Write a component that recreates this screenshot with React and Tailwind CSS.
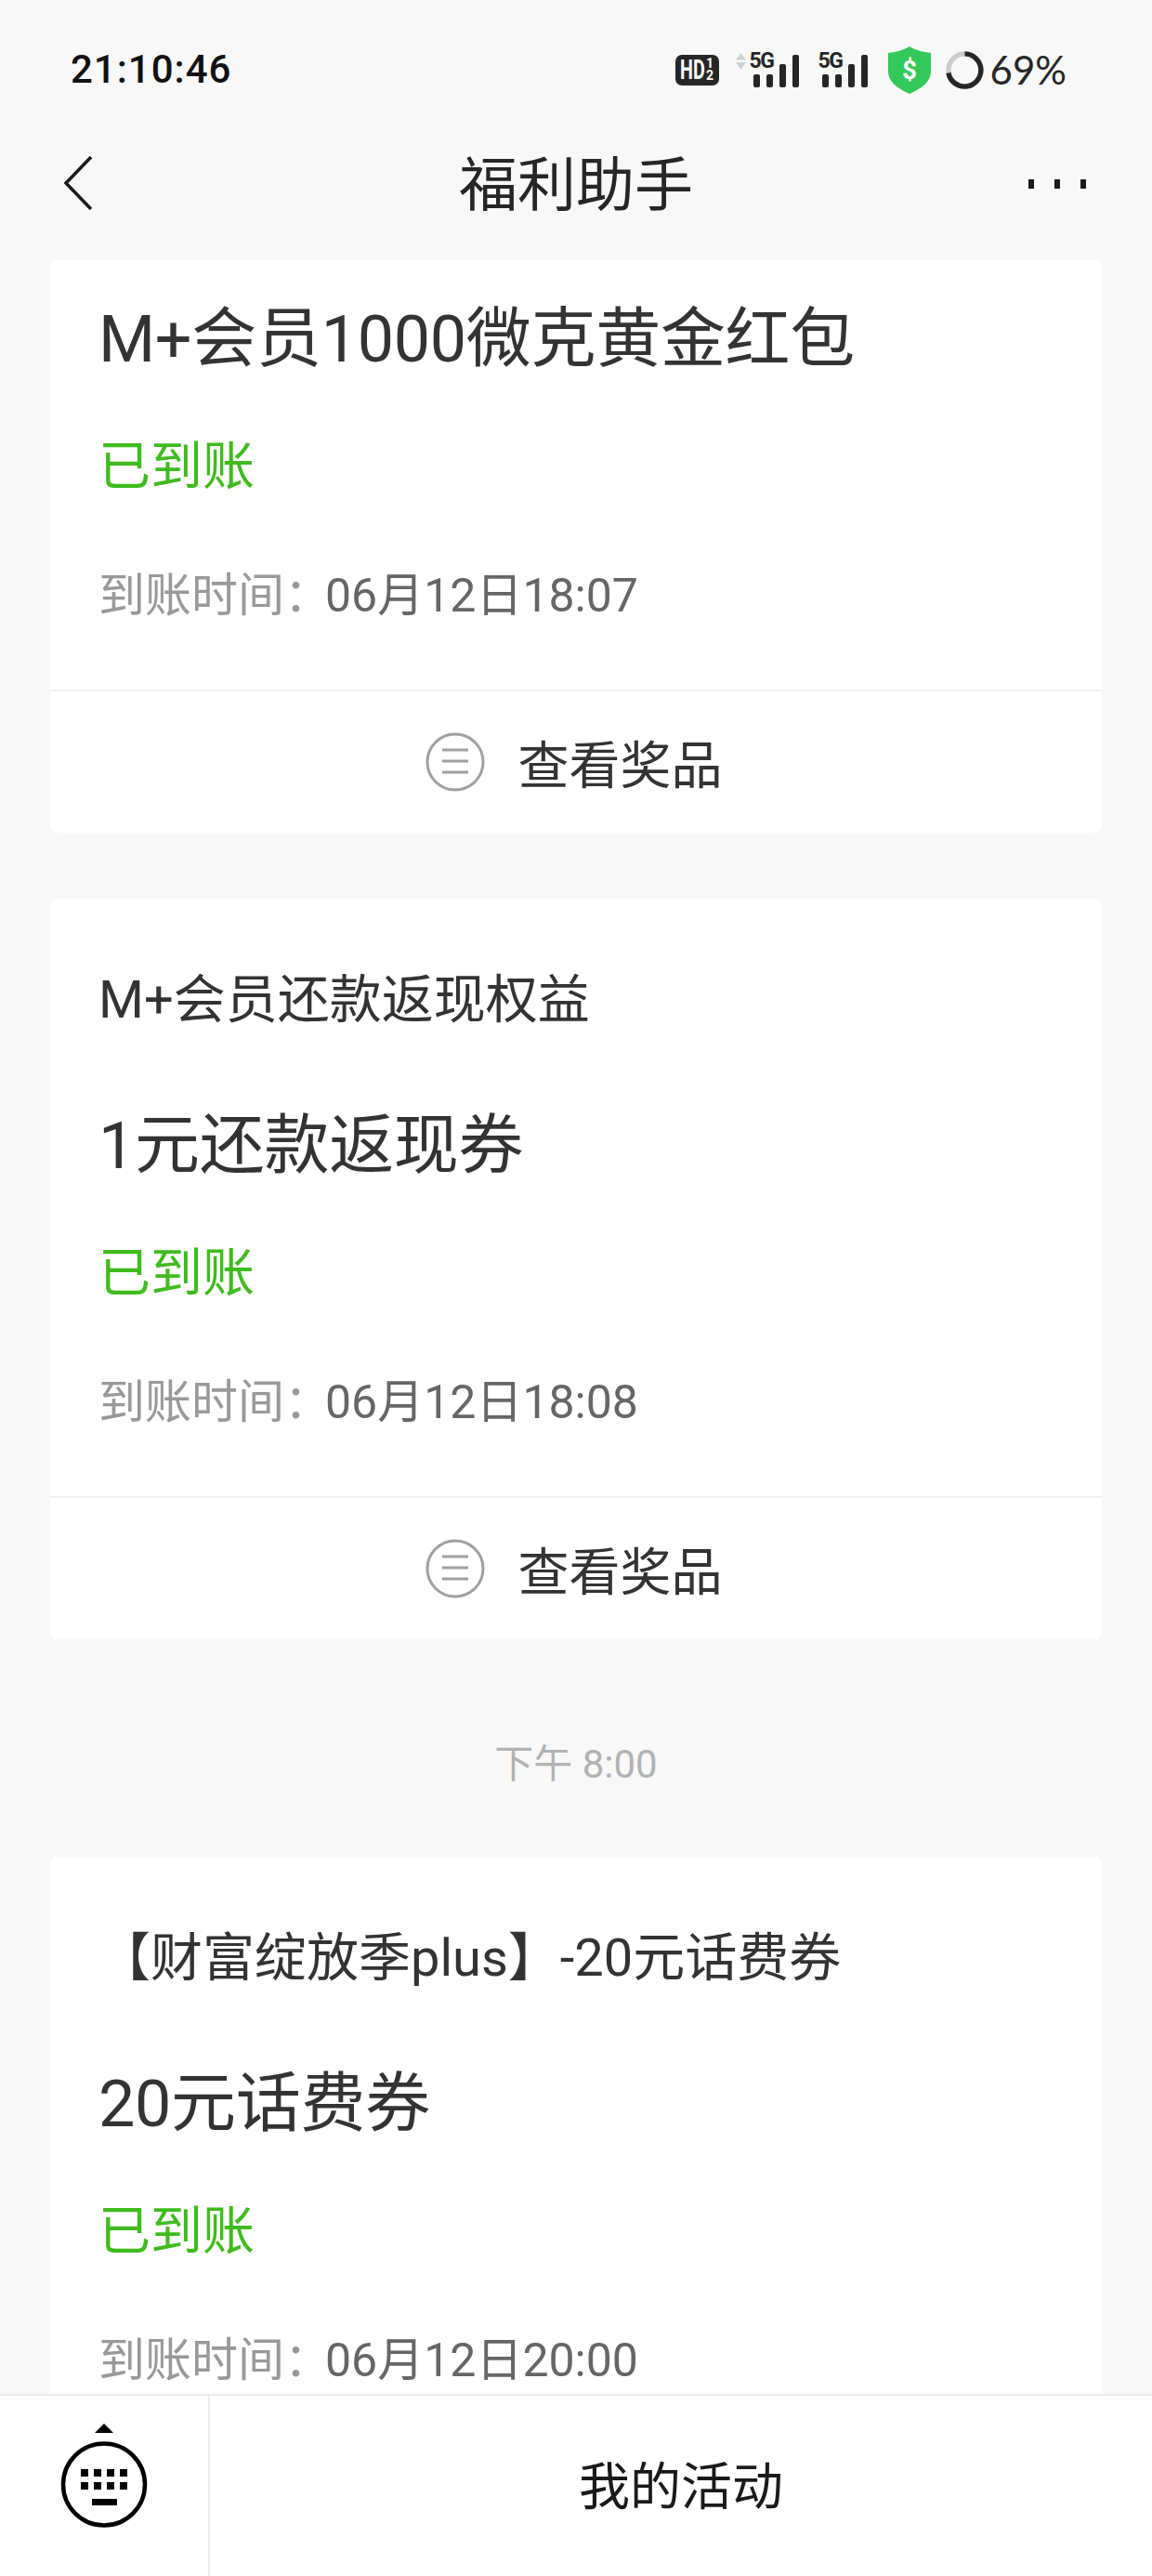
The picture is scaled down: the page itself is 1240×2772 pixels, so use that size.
const FONT = "font-['Roboto','Noto_Sans_CJK_SC',sans-serif]";

function HdIcon() {
  return (
    <div className="flex h-[33px] w-[47px] items-center justify-center overflow-hidden rounded-[7px] bg-[#262626] font-['Roboto',sans-serif] text-white">
      <span className="w-[28px] origin-left scale-x-[0.68] text-[29px] font-bold leading-none">HD</span>
      <span className="flex w-[9px] flex-col items-center text-[14px] font-bold leading-[13px]">
        <span>1</span>
        <span>2</span>
      </span>
    </div>
  );
}

function Signal({ arrows }) {
  return (
    <div className="relative h-[37px] w-[49px]">
      {arrows && (
        <svg className="absolute left-[-19px] top-0" width="11" height="18" viewBox="0 0 11 18">
          <path d="M5.5 0L11 7.5H0zM0 10h11l-5.5 8z" fill="#cfcfcf" />
        </svg>
      )}
      <span className="absolute left-[-4px] top-[-3px] font-['Roboto',sans-serif] text-[23px] font-bold leading-[23px] tracking-[-1.5px] text-[#262626]">
        5G
      </span>
      <div className="absolute bottom-0 left-0 flex items-end gap-[7px]">
        <div className="h-[14px] w-[7px] rounded-[2px] bg-[#262626]" />
        <div className="h-[14px] w-[7px] rounded-[2px] bg-[#262626]" />
        <div className="h-[25px] w-[7px] rounded-[2px] bg-[#262626]" />
        <div className="h-[35px] w-[7px] rounded-[2px] bg-[#262626]" />
      </div>
    </div>
  );
}

function Shield() {
  return (
    <svg width="46" height="51" viewBox="0 0 46 51">
      <path d="M23 0c7 4 14 6 23 7v20c0 11-10 18-23 24C10 45 0 38 0 27V7c9-1 16-3 23-7z" fill="#34c759" />
      <text x="23" y="35" textAnchor="middle" fontSize="28" fontWeight="700" fill="#fff" fontFamily="Roboto">$</text>
    </svg>
  );
}

function Ring() {
  return (
    <svg width="41" height="41" viewBox="0 0 42 42">
      <circle cx="21" cy="21" r="18" fill="none" stroke="#cccccc" strokeWidth="5.5" />
      <path d="M21 3a18 18 0 1 1-18 21" fill="none" stroke="#262626" strokeWidth="5.5" />
    </svg>
  );
}

function StatusBar() {
  return (
    <div className="flex h-[130px] shrink-0 items-start justify-between pl-[76px] pr-[92px] pt-[50px]">
      <span className="font-['Roboto',sans-serif] text-[42px] font-medium leading-[50px] tracking-[1px] text-[#111111]">21:10:46</span>
      <div className="flex h-[50px] items-center">
        <HdIcon />
        <div className="ml-[37px]"><Signal arrows /></div>
        <div className="ml-[25px]"><Signal /></div>
        <div className="ml-[22px]"><Shield /></div>
        <div className="ml-[16px]"><Ring /></div>
        <span className="ml-[7px] font-['Lato',sans-serif] text-[42px] leading-[50px] text-[#262626]">69%</span>
      </div>
    </div>
  );
}

function NavBar() {
  return (
    <div className="relative flex h-[150px] shrink-0 items-start justify-center pt-[38px]">
      <svg className="absolute left-[66px] top-[36px]" width="36" height="62" viewBox="0 0 36 62">
        <path d="M32 3L5 31l27 28" fill="none" stroke="#1a1a1a" strokeWidth="3.5" />
      </svg>
      <span className="text-[63px] leading-[64px] text-[#262626]">福利助手</span>
      <div className="absolute right-[71px] top-[63px] flex gap-[22px]">
        <div className="h-[10px] w-[6px] bg-[#1a1a1a]" />
        <div className="h-[10px] w-[6px] bg-[#1a1a1a]" />
        <div className="h-[10px] w-[6px] bg-[#1a1a1a]" />
      </div>
    </div>
  );
}

function ViewPrize() {
  return (
    <div className="mt-[66px] flex h-[154px] items-center justify-center border-t-2 border-[#efefef] pr-[4px]">
      <svg width="64" height="64" viewBox="0 0 64 64">
        <circle cx="32" cy="32" r="30" fill="none" stroke="#a0a0a0" strokeWidth="3" />
        <path d="M18 19h28M18 31h28M18 43h28" stroke="#a0a0a0" strokeWidth="3" />
      </svg>
      <span className="ml-[35px] mt-[8px] text-[55px] leading-none text-[#333333]">查看奖品</span>
    </div>
  );
}

function Card({ subtitle, title, time, footer, className }) {
  return (
    <div className={`shrink-0 overflow-hidden rounded-[8px] bg-white ${className}`}>
      <div className="px-[52px]">
        {subtitle && <div className="pt-[74px] text-[56px] leading-[70px] text-[#333333]">{subtitle}</div>}
        <div className={`text-[70px] leading-[90px] tracking-[-0.3px] text-[#333333] ${subtitle ? "mt-[77px]" : "pt-[40px]"}`}>{title}</div>
        <div className="mt-[57px] text-[56px] leading-[70px] text-[#3fbb1e]">已到账</div>
        <div className="mt-[69px] flex whitespace-nowrap text-[50px] leading-[70px] text-[#666666]">
          <span className="w-[244px] shrink-0 text-[#999999]">到账时间：</span>
          <span>{time}</span>
        </div>
      </div>
      {footer ? <ViewPrize /> : <div className="h-[60px]" />}
    </div>
  );
}

export default function App() {
  return (
    <div className={`flex h-[2772px] w-[1240px] flex-col overflow-hidden bg-[#f8f8f8] ${FONT}`}>
      <StatusBar />
      <NavBar />
      <div className="min-h-0 flex-1 overflow-hidden px-[54px]">
        <Card title="M+会员1000微克黄金红包" time="06月12日18:07" footer />
        <Card className="mt-[71px]" subtitle="M+会员还款返现权益" title="1元还款返现券" time="06月12日18:08" footer />
        <div className="mt-[105px] text-center text-[42px] leading-[60px] text-[#b2b2b2]">下午 8:00</div>
        <Card className="mt-[69px]" subtitle="【财富绽放季plus】-20元话费券" title="20元话费券" time="06月12日20:00" />
      </div>
      <div className="flex h-[196px] shrink-0 border-t-2 border-[#ececec] bg-white">
        <div className="flex w-[226px] shrink-0 items-start justify-center border-r-2 border-[#ececec] pt-[28px]">
          <svg width="96" height="116" viewBox="0 0 96 116">
            <path d="M38 12L48 2l10 10z" fill="#000" />
            <circle cx="48" cy="67.5" r="44" fill="none" stroke="#000" strokeWidth="4.5" />
            <g fill="#000">
              <rect x="23" y="51" width="8" height="8" />
              <rect x="37" y="51" width="8" height="8" />
              <rect x="51" y="51" width="8" height="8" />
              <rect x="65" y="51" width="8" height="8" />
              <rect x="23" y="65" width="8" height="8" />
              <rect x="37" y="65" width="8" height="8" />
              <rect x="51" y="65" width="8" height="8" />
              <rect x="65" y="65" width="8" height="8" />
              <rect x="35" y="83" width="27" height="7" />
            </g>
          </svg>
        </div>
        <div className="flex flex-1 items-center justify-center pt-[3px] text-[55px] leading-none text-[#1a1a1a]">我的活动</div>
      </div>
    </div>
  );
}
